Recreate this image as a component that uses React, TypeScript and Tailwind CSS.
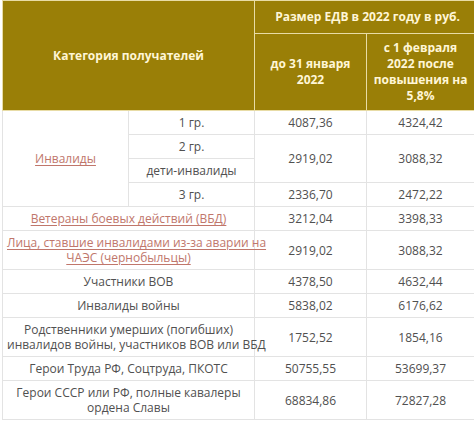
import React from "react";

const td = "border border-[#e3e3e3] px-[4px] py-[4px] text-center align-middle whitespace-nowrap";
const link = "text-[#c0766b] underline underline-offset-2 decoration-[#c0766b]";

type Row = { label: React.ReactNode; a: string; b: string };

const rows: Row[] = [
  { label: "Участники ВОВ", a: "4378,50", b: "4632,44" },
  { label: "Инвалиды войны", a: "5838,02", b: "6176,62" },
  {
    label: (
      <>
        Родственники умерших (погибших)
        <br />
        инвалидов войны, участников ВОВ или ВБД
      </>
    ),
    a: "1752,52",
    b: "1854,16",
  },
  { label: "Герои Труда РФ, Соцтруда, ПКОТС", a: "50755,55", b: "53699,37" },
  {
    label: (
      <>
        Герои СССР или РФ, полные кавалеры
        <br />
        ордена Славы
      </>
    ),
    a: "68834,86",
    b: "72827,28",
  },
];

export default function App() {
  return (
    <div className="w-[474px] h-[422px] overflow-hidden bg-white pl-[2px] font-['Open_Sans',sans-serif] text-[12px] leading-[15px] text-[#505050]">
      <table className="border-collapse table-fixed w-[478px]">
        <colgroup>
          <col className="w-[126px]" />
          <col className="w-[126px]" />
          <col className="w-[112px]" />
          <col className="w-[114px]" />
        </colgroup>
        <thead className="bg-[#9a7f07] text-[#fff6d6] font-bold leading-[16px]">
          <tr>
            <th colSpan={2} rowSpan={2} className="border border-[#e8dca6] px-[4px] text-center align-middle">
              Категория получателей
            </th>
            <th colSpan={2} className="border border-[#e8dca6] px-[4px] py-[8px] text-center">
              Размер ЕДВ в 2022 году в руб.
            </th>
          </tr>
          <tr>
            <th className="border border-[#e8dca6] px-[4px] py-[6px] text-center align-middle">
              до 31 января
              <br />
              2022
            </th>
            <th className="border border-[#e8dca6] px-[4px] pr-[10px] py-[6px] text-center align-middle">
              с 1 февраля
              <br />
              2022 после
              <br />
              повышения на
              <br />
              5,8%
            </th>
          </tr>
        </thead>
        <tbody>
          <tr>
            <td rowSpan={4} className={td}>
              <span className={link}>Инвалиды</span>
            </td>
            <td className={td}>1 гр.</td>
            <td className={td}>4087,36</td>
            <td className={`${td} pr-[10px]`}>4324,42</td>
          </tr>
          <tr>
            <td className={td}>2 гр.</td>
            <td rowSpan={2} className={td}>2919,02</td>
            <td rowSpan={2} className={`${td} pr-[10px]`}>3088,32</td>
          </tr>
          <tr>
            <td className={td}>дети-инвалиды</td>
          </tr>
          <tr>
            <td className={td}>3 гр.</td>
            <td className={td}>2336,70</td>
            <td className={`${td} pr-[10px]`}>2472,22</td>
          </tr>
          <tr>
            <td colSpan={2} className={td}>
              <span className={link}>Ветераны боевых действий (ВБД)</span>
            </td>
            <td className={td}>3212,04</td>
            <td className={`${td} pr-[10px]`}>3398,33</td>
          </tr>
          <tr>
            <td colSpan={2} className={td}>
              <span className={link}>
                Лица, ставшие инвалидами из-за аварии на
                <br />
                ЧАЭС (чернобыльцы)
              </span>
            </td>
            <td className={td}>2919,02</td>
            <td className={`${td} pr-[10px]`}>3088,32</td>
          </tr>
          {rows.map((r, i) => (
            <tr key={i}>
              <td colSpan={2} className={td}>
                {r.label}
              </td>
              <td className={td}>{r.a}</td>
              <td className={`${td} pr-[10px]`}>{r.b}</td>
            </tr>
          ))}
        </tbody>
      </table>
    </div>
  );
}
